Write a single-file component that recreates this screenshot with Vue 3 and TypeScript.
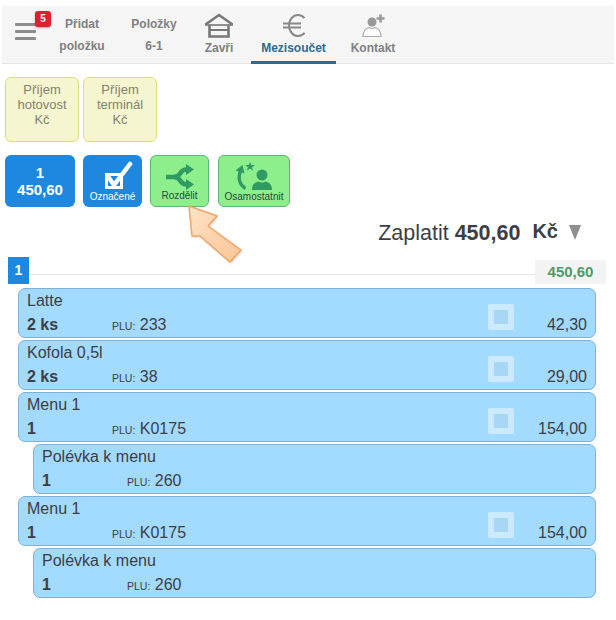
<script setup lang="ts">
interface Row { name: string; qty: string; plu: string; price?: string; sub?: boolean }
const rows: Row[] = [
  { name: 'Latte', qty: '2 ks', plu: '233', price: '42,30' },
  { name: 'Kofola 0,5l', qty: '2 ks', plu: '38', price: '29,00' },
  { name: 'Menu 1', qty: '1', plu: 'K0175', price: '154,00' },
  { name: 'Polévka k menu', qty: '1', plu: '260', sub: true },
  { name: 'Menu 1', qty: '1', plu: 'K0175', price: '154,00' },
  { name: 'Polévka k menu', qty: '1', plu: '260', sub: true },
]
</script>

<template>
  <div class="page">
    <nav class="nav">
      <div class="burger">
        <i></i><i></i><i></i>
        <span class="badge">5</span>
      </div>
      <div class="two add"><span>Přidat</span><span>položku</span></div>
      <div class="two items"><span>Položky</span><span>6-1</span></div>
      <div class="tab close">
        <svg width="30" height="25" viewBox="0 0 30 25" fill="none" stroke="#777" stroke-width="2.6">
          <path d="M1.5 11.5 15 2l13.5 9.5" />
          <path d="M1 12h28" stroke-width="1.6" />
          <path d="M5.5 12v11.5h19V12" />
          <path d="M5.5 17h19" stroke-width="2" />
        </svg>
        <span>Zavři</span>
      </div>
      <div class="tab active">
        <svg width="26" height="25" viewBox="0 0 26 25" fill="none" stroke="#888" stroke-width="2">
          <path d="M23.5 5.2C21.8 3 19.6 2 17 2 12 2 8 6.5 8 12.5S12 23 17 23c2.800 0 5-1.100 6.500-3.300" />
          <path d="M2 10.500h18M2 14.500h18" />
        </svg>
        <span>Mezisoučet</span>
      </div>
      <div class="tab contact">
        <svg width="30" height="25" viewBox="0 0 30 25">
          <circle cx="14" cy="9" r="4.500" fill="#999" />
          <path d="M5 23.500c0-5 2.500-8 6-9 1.800 1.200 4.200 1.200 6 0 3.500 1 6 4 6 9z" fill="#fff" stroke="#aaa" stroke-width="1.200" />
          <path d="M22.500 1.500v8M18.500 5.500h8" stroke="#999" stroke-width="2.600" />
        </svg>
        <span>Kontakt</span>
      </div>
    </nav>

    <div class="income">
      <div class="tile">Příjem<br />hotovost<br />Kč</div>
      <div class="tile">Příjem<br />terminál<br />Kč</div>
    </div>

    <div class="actions">
      <div class="btn blue sum">1<br />450,60</div>
      <div class="btn blue marked">
        <svg width="40" height="30" viewBox="0 0 40 30">
          <path d="M13.500 14.500h15v13h-15z" fill="none" stroke="#fff" stroke-width="3" />
          <path d="M16 18l5 7L37 4" fill="none" stroke="#fff" stroke-width="4.500" stroke-linecap="round" />
        </svg>
        <span>Označené</span>
      </div>
      <div class="btn green split">
        <svg width="30" height="26" viewBox="0 0 30 26" fill="none" stroke="#2f9a62" stroke-width="4.500">
          <path d="M1 13h8c3.500 0 5-1.500 6.500-4s3.500-3.500 6-3.500" />
          <path d="M9 13c3.500 0 5 1.500 6.500 4s3.500 3.500 6 3.500" />
          <path d="M21 0l8 5.500-8 5.500zM21 15l8 5.500-8 5.500z" fill="#2f9a62" stroke="none" />
        </svg>
        <span>Rozdělit</span>
      </div>
      <div class="btn green alone">
        <svg width="40" height="29" viewBox="0 0 40 29" fill="#2f9a62">
          <path d="M11.500 26.500C5.500 23 3.500 16 6.500 9" fill="none" stroke="#2f9a62" stroke-width="3.200" />
          <path d="M8.500 3 1.500 8.500l9 3z" />
          <path d="m16 0 1.300 3H21l-3 2.300 1.100 3.500-3.100-2.200-3.100 2.200L14 5.300 11 3h3.700z" />
          <circle cx="28" cy="13" r="5.500" />
          <path d="M18 28c0-5 2-7.500 6.500-8.500 2 1.300 5 1.300 7 0C36 20.500 38 23 38 28z" />
        </svg>
        <span>Osamostatnit</span>
      </div>
    </div>

    <div class="pay">
      <span class="pay-label">Zaplatit <b>450,60</b></span>
      <b class="cur">Kč</b>
      <span class="tri"></span>
    </div>

    <div class="group">
      <span class="num">1</span>
      <span class="line"></span>
      <span class="chip">450,60</span>
    </div>

    <div class="rows">
      <div v-for="(r, i) in rows" :key="i" class="row" :class="{ sub: r.sub }">
        <div class="name">{{ r.name }}</div>
        <div class="meta">
          <b class="qty">{{ r.qty }}</b>
          <span class="plu"><small>PLU:</small> {{ r.plu }}</span>
          <span v-if="r.price" class="check"></span>
          <span v-if="r.price" class="price">{{ r.price }}</span>
        </div>
      </div>
    </div>

    <svg class="pointer" width="70" height="70" viewBox="0 0 70 70">
      <defs>
        <linearGradient id="ag" x1="0" y1="0" x2="1" y2="1">
          <stop offset="0" stop-color="#fde3c8" />
          <stop offset="1" stop-color="#fbc594" />
        </linearGradient>
      </defs>
      <path d="M3 3 31 13 22 23 55 47 44 59 14 33 6 33Z" fill="url(#ag)" stroke="#f0a566" stroke-width="1.500" stroke-linejoin="round" />
    </svg>
  </div>
</template>

<style>
html, body { background: #fff; }
</style>

<style scoped>
.page {
  position: relative;
  width: 616px;
  height: 620px;
  overflow: hidden;
  font-family: "Liberation Sans", Arial, sans-serif;
  color: #3b3f45;
}
.nav {
  position: absolute;
  left: 0;
  top: 6px;
  width: 612px;
  height: 58px;
  margin-left: 2px;
  background: #f5f5f5;
  border-bottom: 1px solid #e4e4e4;
  box-sizing: border-box;
}
.burger { position: absolute; left: 13px; top: 17px; width: 21px; }
.burger i { display: block; height: 3px; margin-bottom: 4px; background: #8c8c8c; border-radius: 1px; }
.badge {
  position: absolute;
  left: 20px;
  top: -12px;
  width: 16px;
  height: 16px;
  border-radius: 3px;
  background: #e0202e;
  color: #fff;
  font-size: 10px;
  font-weight: 700;
  line-height: 15px;
  text-align: center;
  box-shadow: 0 1px 2px rgba(0,0,0,.3);
}
.two {
  position: absolute;
  top: 10px;
  display: flex;
  flex-direction: column;
  align-items: center;
  gap: 6px;
  font-size: 12px;
  line-height: 16px;
  font-weight: 700;
  color: #808080;
}
.add { left: 55px; width: 50px; }
.items { left: 125px; width: 54px; }
.tab {
  position: absolute;
  top: 7px;
  height: 51px;
  display: flex;
  flex-direction: column;
  align-items: center;
  font-size: 12px;
  font-weight: 700;
  color: #808080;
  box-sizing: border-box;
}
.tab svg { display: block; margin-bottom: 3px; }
.close { left: 201px; width: 32px; }
.active { left: 249px; width: 85px; color: #2f6a91; border-bottom: 3px solid #2f6a91; }
.contact { left: 347px; width: 48px; }

.income { position: absolute; left: 5px; top: 77px; display: flex; gap: 4px; }
.tile {
  width: 74px;
  height: 65px;
  box-sizing: border-box;
  background: #f5f5cf;
  border: 1px solid #dcdc7a;
  border-radius: 6px;
  padding-top: 4px;
  text-align: center;
  font-size: 13px;
  line-height: 15px;
  color: #83836f;
}

.actions { position: absolute; left: 5px; top: 155px; height: 52px; }
.btn {
  position: absolute;
  top: 0;
  box-sizing: border-box;
  border-radius: 6px;
  display: flex;
  flex-direction: column;
  align-items: center;
  text-align: center;
}
.blue { background: #1e88e0; color: #fff; }
.green { background: #8cef8c; border: 1px solid #5fb578; color: #2c4a38; font-size: 10px; }
.sum { left: 0; width: 70px; height: 52px; padding-top: 9px; font-size: 15px; line-height: 17px; font-weight: 700; display: block; }
.marked { left: 78px; width: 59px; height: 52px; padding-top: 5px; font-size: 10px; line-height: 12px; }
.marked svg { display: block; margin-bottom: 1px; }
.split { left: 145px; width: 59px; height: 52px; padding-top: 8px; line-height: 12px; }
.split svg { display: block; margin-bottom: 0; }
.alone svg { display: block; margin-bottom: 0; }
.alone { left: 213px; width: 72px; height: 52px; padding-top: 6px; line-height: 12px; }

.pay { position: absolute; right: 35px; top: 219px; display: flex; align-items: flex-start; }
.pay-label { font-size: 21.500px; line-height: 28px; }
.cur { font-size: 20px; line-height: 24px; margin-left: 12px; }
.tri {
  width: 0;
  height: 0;
  margin: 6px 0 0 11px;
  border-left: 6px solid transparent;
  border-right: 6px solid transparent;
  border-top: 15px solid #8f8f8f;
}

.group { position: absolute; left: 8px; top: 257px; width: 598px; height: 27px; }
.num {
  position: absolute;
  left: 0;
  top: 0;
  width: 21px;
  height: 27px;
  background: #1e88e0;
  color: #fff;
  font-size: 14px;
  font-weight: 700;
  line-height: 27px;
  text-align: center;
}
.line { position: absolute; left: 21px; right: 0; top: 17px; height: 1px; background: #e6e6e6; }
.chip {
  position: absolute;
  right: 0;
  top: 3px;
  width: 71px;
  height: 24px;
  background: #f3f3f3;
  color: #4f9a6a;
  font-size: 15px;
  font-weight: 700;
  line-height: 24px;
  text-align: center;
}

.rows { position: absolute; left: 18px; top: 288px; width: 578px; display: flex; flex-direction: column; gap: 2px; }
.row {
  position: relative;
  height: 50px;
  box-sizing: border-box;
  background: #a3daff;
  border: 1px solid #7fb0d8;
  border-radius: 7px;
  padding: 3px 8px 0;
}
.row.sub { margin-left: 15px; }
.name { font-size: 16px; line-height: 18px; }
.meta { position: relative; height: 26px; margin-top: 3px; font-size: 16px; line-height: 24px; }
.qty { position: absolute; left: 0; top: 0; }
.plu { position: absolute; left: 85px; top: 0; }
.plu small { font-size: 10.500px; }
.check {
  position: absolute;
  left: 461px;
  top: -9px;
  width: 26px;
  height: 26px;
  box-sizing: border-box;
  border: 6px solid #cceaff;
  border-radius: 2px;
  background: #a8d6f5;
}
.price { position: absolute; right: 0; top: 0; }
.pointer { position: absolute; left: 186px; top: 203px; filter: drop-shadow(1px 1px 1px rgba(0,0,0,.15)); }
</style>
